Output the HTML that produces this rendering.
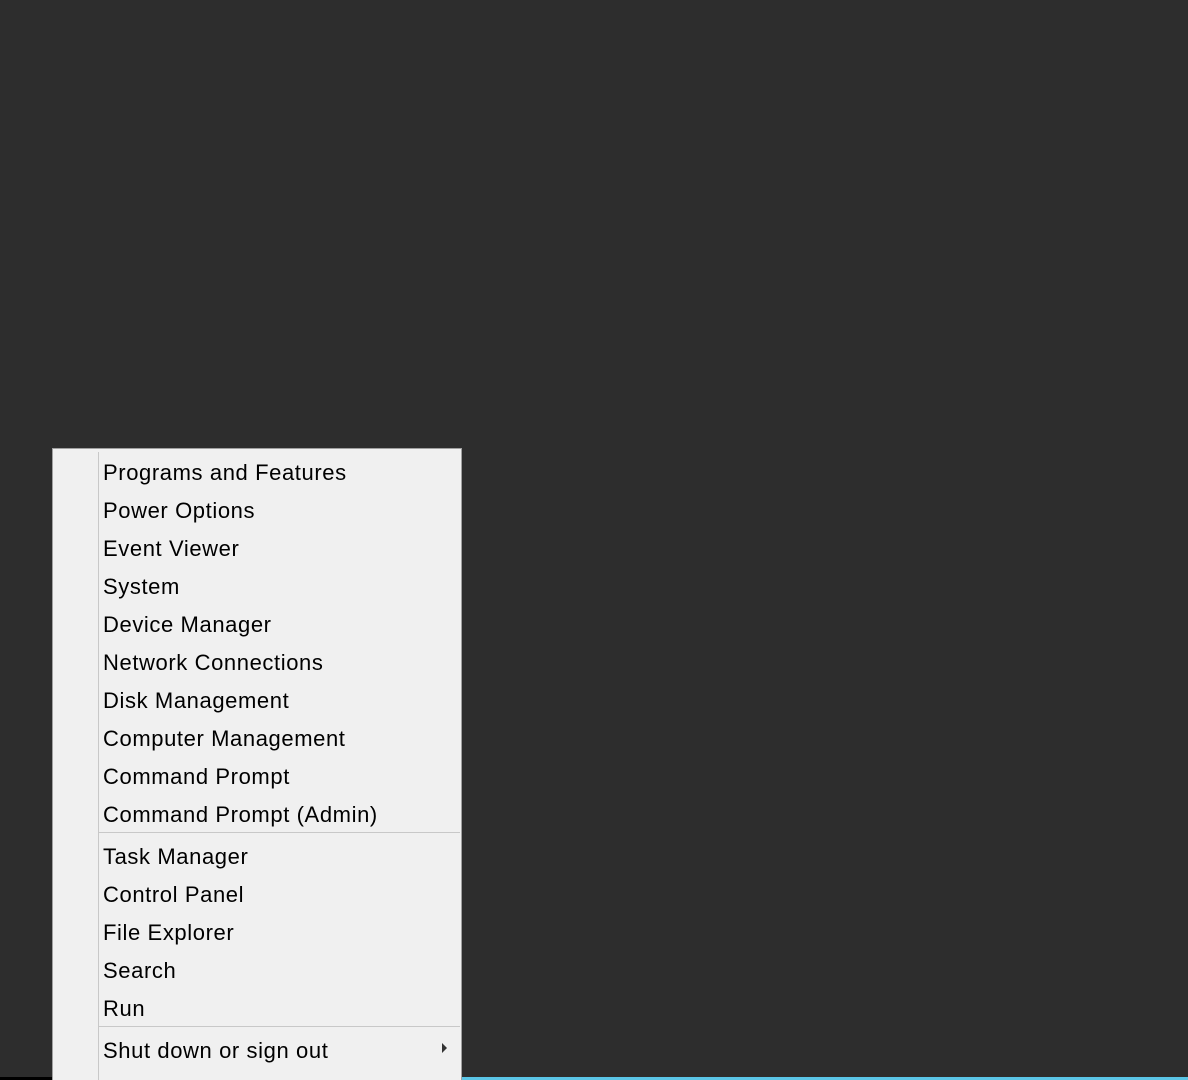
<!DOCTYPE html>
<html><head><style>
html,body{margin:0;padding:0;width:1188px;height:1080px;overflow:hidden;}
body{background:#2d2d2d;position:relative;font-family:"Liberation Sans",sans-serif;}
#menu{position:absolute;left:52px;top:448px;width:408px;height:640px;background:#f0f0f0;border:1px solid #a0a0a0;}
#vl{position:absolute;left:45px;top:3px;width:1px;height:640px;background:#c8c8c8;}
.it{position:absolute;left:50px;font-size:22px;letter-spacing:0.6px;color:#000;line-height:38px;height:38px;white-space:nowrap;}
.sep{position:absolute;left:46px;width:361px;height:1px;background:#c8c8c8;}
.arr{position:absolute;left:389px;width:0;height:0;border-top:5px solid transparent;border-bottom:5px solid transparent;border-left:5px solid #333;}
</style></head><body>
<div style="position:absolute;left:0;top:1077px;width:52px;height:3px;background:#000"></div>
<div style="position:absolute;left:462px;top:1077px;width:726px;height:3px;background:#5bc5e6"></div>
<div id="menu">
<div id="vl"></div>
<div class="it" style="top:5px">Programs and Features</div>
<div class="it" style="top:43px">Power Options</div>
<div class="it" style="top:81px">Event Viewer</div>
<div class="it" style="top:119px">System</div>
<div class="it" style="top:157px">Device Manager</div>
<div class="it" style="top:195px">Network Connections</div>
<div class="it" style="top:233px">Disk Management</div>
<div class="it" style="top:271px">Computer Management</div>
<div class="it" style="top:309px">Command Prompt</div>
<div class="it" style="top:347px">Command Prompt (Admin)</div>
<div class="sep" style="top:383px"></div>
<div class="it" style="top:389px">Task Manager</div>
<div class="it" style="top:427px">Control Panel</div>
<div class="it" style="top:465px">File Explorer</div>
<div class="it" style="top:503px">Search</div>
<div class="it" style="top:541px">Run</div>
<div class="sep" style="top:577px"></div>
<div class="it" style="top:583px">Shut down or sign out</div>
<div class="arr" style="top:594px"></div>
<div class="it" style="top:621px">Desktop</div>
</div>
</body></html>
